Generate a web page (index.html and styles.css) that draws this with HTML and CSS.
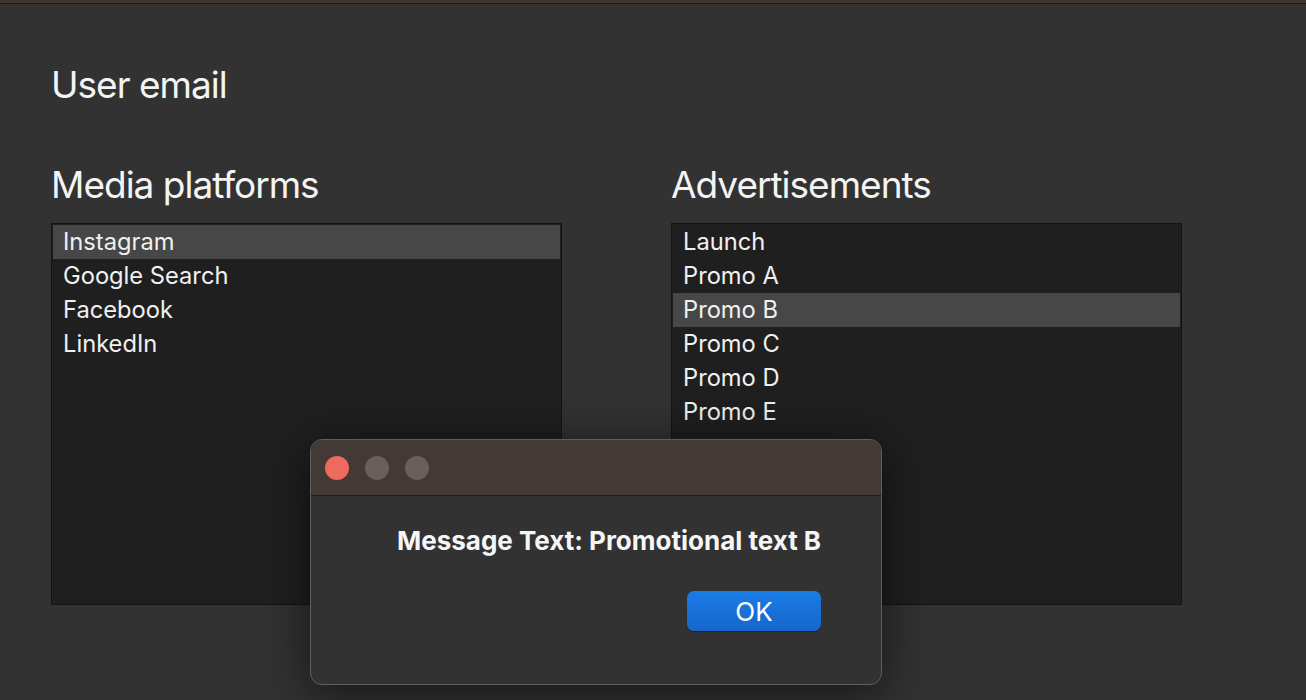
FILE: index.html
```html
<!DOCTYPE html>
<html lang="en">
<head>
<meta charset="utf-8">
<title>User email</title>
<link rel="stylesheet" href="styles.css">
</head>
<body>
<div class="topbar"></div>
<main class="content">
  <h1 class="title">User email</h1>
  <div class="columns">
    <section class="column">
      <h2 class="heading">Media platforms</h2>
      <ul class="list">
        <li class="item selected">Instagram</li>
        <li class="item">Google Search</li>
        <li class="item">Facebook</li>
        <li class="item">LinkedIn</li>
      </ul>
    </section>
    <section class="column">
      <h2 class="heading">Advertisements</h2>
      <ul class="list">
        <li class="item">Launch</li>
        <li class="item">Promo A</li>
        <li class="item selected">Promo B</li>
        <li class="item">Promo C</li>
        <li class="item">Promo D</li>
        <li class="item">Promo E</li>
      </ul>
    </section>
  </div>
</main>
<div class="dialog">
  <div class="titlebar">
    <span class="light red"></span>
    <span class="light grey"></span>
    <span class="light grey"></span>
  </div>
  <div class="dialog-body">
    <p class="message">Message Text: Promotional text B</p>
    <div class="actions">
      <button class="ok">OK</button>
    </div>
  </div>
</div>
</body>
</html>
```
FILE: styles.css
```css
* { box-sizing: border-box; }
html, body { margin: 0; padding: 0; }
body {
  width: 1306px;
  height: 700px;
  overflow: hidden;
  background: #323232;
  font-family: Inter, "Noto Sans", "Liberation Sans", sans-serif;
  color: #ffffff;
  position: relative;
}
.topbar {
  height: 4px;
  background: #3f3630;
  border-bottom: 1px solid #1c1a19;
}
.content {
  padding: 0 0 0 51px;
}
.title {
  margin: 0;
  padding-top: 57px;
  font-size: 37px;
  font-weight: 400;
  letter-spacing: -1px;
  line-height: 48px;
  color: #f4f4f4;
}
.columns {
  display: flex;
  gap: 109px;
  margin-top: 52px;
}
.column { width: 511px; }
.heading {
  margin: 0;
  font-size: 37px;
  font-weight: 400;
  letter-spacing: -1px;
  line-height: 48px;
  color: #f4f4f4;
}
.list {
  list-style: none;
  margin: 14px 0 0 0;
  padding: 1px;
  height: 382px;
  background: #1f1f1f;
  border: 1px solid #141414;
}
.item {
  height: 34px;
  line-height: 34px;
  padding-left: 10px;
  font-size: 23.7px;
  color: #f0f0f0;
}
.item.selected { background: #474747; }
.dialog {
  position: absolute;
  left: 310px;
  top: 439px;
  width: 572px;
  height: 246px;
  border-radius: 12px;
  border: 1px solid #5e5e5e;
  background: #323232;
  overflow: hidden;
  box-shadow: 0 8px 50px rgba(0,0,0,0.6);
}
.titlebar {
  height: 56px;
  background: #433935;
  border-bottom: 1px solid #1e1c1b;
  display: flex;
  align-items: center;
  gap: 16px;
  padding-left: 14px;
}
.light {
  width: 24px;
  height: 24px;
  border-radius: 50%;
}
.light.red { background: #ee6a5d; }
.light.grey { background: #695f5b; }
.dialog-body {
  padding: 28px 0 0 0;
}
.message {
  margin: 0;
  text-align: center;
  padding-left: 26px;
  white-space: nowrap;
  font-size: 26px;
  font-weight: 700;
  line-height: 34px;
  color: #f6f6f6;
  letter-spacing: 0;
}
.actions {
  display: flex;
  justify-content: flex-end;
  padding-right: 60px;
  margin-top: 33px;
}
.ok {
  width: 134px;
  height: 40px;
  border: none;
  border-radius: 7px;
  background: linear-gradient(#1a7ce6, #1667cc);
  color: #ffffff;
  font-family: Inter, "Noto Sans", "Liberation Sans", sans-serif;
  font-size: 26px;
  font-weight: 400;
  padding: 0;
  box-shadow: 0 1px 1px rgba(0,0,0,0.3);
}
```
